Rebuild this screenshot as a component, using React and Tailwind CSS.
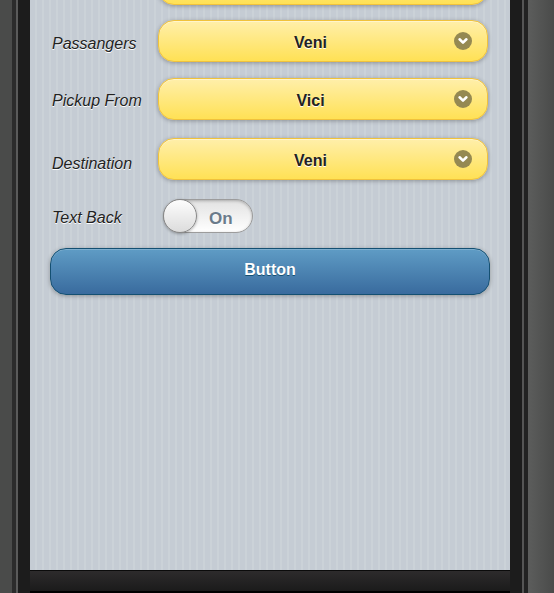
import React from "react";

const Chevron = () => (
  <span className="flex h-[18px] w-[18px] items-center justify-center rounded-full bg-[#958952]">
    <svg width="12" height="12" viewBox="0 0 12 12">
      <path d="M2.6 4.3 L6 7.6 L9.4 4.3" fill="none" stroke="#fff" strokeWidth="2.6" strokeLinecap="round" strokeLinejoin="round" />
    </svg>
  </span>
);

function Select({ value }) {
  return (
    <div className="relative flex h-[42px] flex-1 items-center justify-center rounded-[16px] border border-[#f0c23c] bg-[linear-gradient(#ffefaa,#ffe155)] pl-[20px] pr-[45px] pt-[3px] text-[16px] font-bold text-[#222] shadow-[0_1px_4px_rgba(0,0,0,0.3),inset_0_1px_0_rgba(255,255,255,0.4)] [text-shadow:0_1px_0_#fff]">
      {value ? <span>{value}</span> : null}
      <span className="absolute right-[15px] top-1/2 -translate-y-1/2">
        <Chevron />
      </span>
    </div>
  );
}

function Label({ children, className = "" }) {
  return (
    <div className={"w-[106px] shrink-0 text-[16px] italic text-[#222] [text-shadow:0_1px_0_#fff] " + className}>
      {children}
    </div>
  );
}

export default function App() {
  return (
    <div
      className="flex h-[593px] w-[554px] overflow-hidden bg-[#4a4b4a]"
      style={{ fontFamily: '"Liberation Sans", Arial, sans-serif' }}
    >
      {/* left frame */}
      <div className="w-[12px] shrink-0 bg-[#4a4b4a]" />
      <div className="w-[4px] shrink-0 bg-[#2b2b2b]" />
      <div className="w-[2px] shrink-0 bg-[#5a5a5a]" />
      <div className="w-[12px] shrink-0 bg-[#1c1c1c]" />

      {/* screen */}
      <div className="flex w-[480px] shrink-0 flex-col">
        <div className="flex flex-1 flex-col overflow-hidden bg-[#c5ccd4] bg-[linear-gradient(90deg,#c5ccd4_0,#c5ccd4_5px,#cbd2d8_5px,#cbd2d8_7px)] bg-[length:7px_7px]">
          <div className="mt-[-37px] flex flex-col">
            <div className="flex items-center px-[22px]">
              <Label />
              <Select value="" />
            </div>
            <div className="mt-[15px] flex items-center px-[22px]">
              <Label className="pt-[5px]">Passangers</Label>
              <Select value="Veni" />
            </div>
            <div className="mt-[16px] flex items-center px-[22px]">
              <Label className="pt-[4px]">Pickup From</Label>
              <Select value="Vici" />
            </div>
            <div className="mt-[18px] flex items-center px-[22px]">
              <Label className="pt-[9px]">Destination</Label>
              <Select value="Veni" />
            </div>
            <div className="mt-[19px] flex items-center px-[22px]">
              <Label className="pt-[3px]">Text Back</Label>
              <div className="relative ml-[5px] flex h-[34px] w-[90px] items-center rounded-full border border-[#9c9c9c] bg-[linear-gradient(#e2e2e2,#f2f2f2_55%,#ffffff)] shadow-[inset_0_1px_3px_rgba(0,0,0,0.25)]">
                <span className="absolute left-[45px] top-[6px] text-[17px] font-bold text-[#6b7b8b] [text-shadow:0_1px_0_#fff]">
                  On
                </span>
                <span className="absolute left-[-1px] top-[-1px] h-[34px] w-[34px] rounded-full border border-[#888] bg-[linear-gradient(#fdfdfd,#dcdcdc)] shadow-[0_1px_3px_rgba(0,0,0,0.3)]" />
              </div>
            </div>
            <div className="mx-[20px] mt-[15px] flex h-[47px] items-center justify-center rounded-[16px] border border-[#145072] bg-[linear-gradient(#5f9cc5,#396b9e)] pb-[3px] text-[16px] font-bold text-white shadow-[0_1px_4px_rgba(0,0,0,0.3),inset_0_1px_0_rgba(255,255,255,0.2)] [text-shadow:0_1px_0_#145072]">
              Button
            </div>
          </div>
        </div>
        {/* footer bar */}
        <div className="h-[23px] shrink-0 border-t border-[#0b0b0b] border-b-2 border-b-black bg-[linear-gradient(#2d2b2c,#1b1b1b)]" />
      </div>

      {/* right frame */}
      <div className="w-[12px] shrink-0 bg-[#1c1c1c]" />
      <div className="w-[2px] shrink-0 bg-[#555]" />
      <div className="w-[4px] shrink-0 bg-[#222]" />
      <div className="flex-1 bg-[linear-gradient(90deg,#5c5d5c,#4a4b4a)]" />
    </div>
  );
}
